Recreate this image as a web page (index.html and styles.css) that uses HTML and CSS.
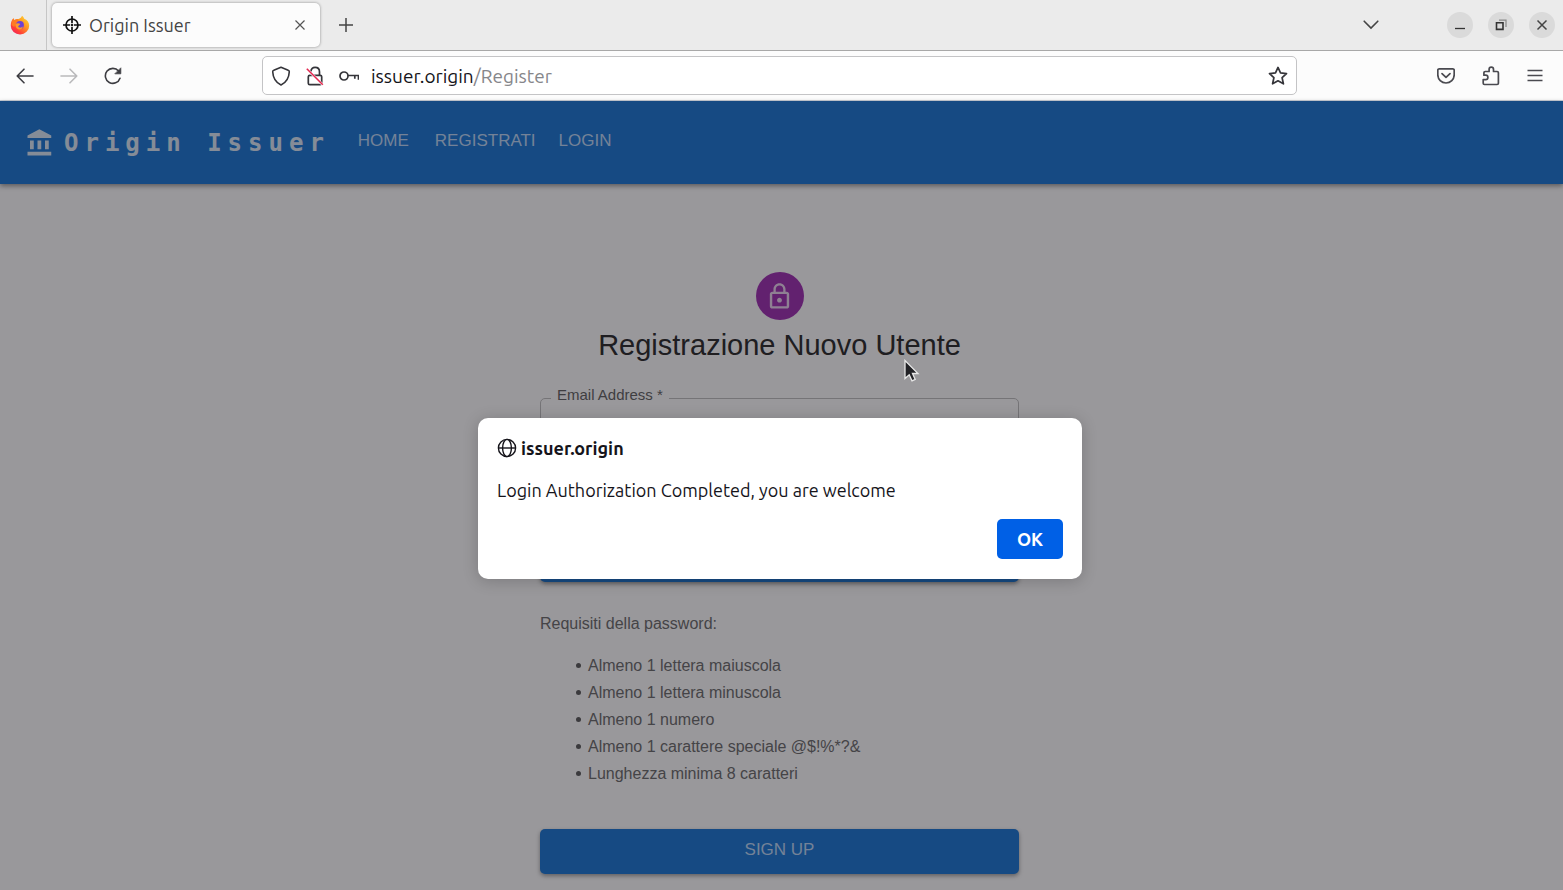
FILE: index.html
```html
<!DOCTYPE html>
<html lang="it">
<head>
<meta charset="utf-8">
<meta name="viewport" content="width=device-width, initial-scale=1">
<title>Origin Issuer</title>
<link rel="stylesheet" href="styles.css">
</head>
<body>
<div class="tabs">
  <div class="pinned">
    <svg class="icon" viewBox="0 0 20 20">
      <defs>
        <linearGradient id="flame" x1="1" y1="0" x2="0.1" y2="1">
          <stop offset="0" stop-color="#ffe83a"/><stop offset=".4" stop-color="#ff9a22"/><stop offset=".75" stop-color="#ff4038"/><stop offset="1" stop-color="#ee1c66"/>
        </linearGradient>
      </defs>
      <path fill="url(#flame)" d="M12 .8c1.300 1 1.900 1.900 2.200 2.900 2.800 1 5 3.500 5 7.100a9.200 8.500 0 0 1-18.400.2C.7 7.900 1.500 5 3.400 3.200l.7 2c1-.8 2-1.200 3.200-1.100C9 4 9.700 3.400 10.500 3 11.100 2.500 11.700 1.800 12 .8z"/>
      <path fill="#ff7a24" d="M3.500 3.200l1 2.300 3-1.200 1.500 2.300-3 2-1.800 3.500L1.500 10c0-3 .7-5 2-6.800z"/>
      <circle cx="10" cy="10" r="3.900" fill="#6c42d6"/>
      <path fill="#ff9b28" d="M5.700 8.800c1.600-1 3.100-.8 4.700.2l-1.500 1.500c-.7.500-1 1-.2 1.700 1.200.8 2.900.5 4.200-.7-.5 2.200-2.200 3.200-4 2.900-2.500-.4-3.900-3-3.200-5.600z"/>
    </svg>
  </div>
  <div class="tab">
    <svg class="icon-s" viewBox="0 0 18 18" fill="none" stroke="#111" stroke-width="1.700"><circle cx="9" cy="9" r="6"/><path d="M9 0v7.200M9 10.800V18M0 9h7.200M10.800 9H18M8 9h2M9 8v2"/></svg>
    <span class="tab-title">Origin Issuer</span>
    <button class="plain" aria-label="Close tab"><svg class="icon-xs" viewBox="0 0 12 12" stroke="#555" stroke-width="1.200"><path d="M1.500 1.500l9 9M10.500 1.500l-9 9"/></svg></button>
  </div>
  <button class="plain new-tab" aria-label="New tab"><svg class="icon-m" viewBox="0 0 16 16" stroke="#444" stroke-width="1.500"><path d="M8 1v14M1 8h14"/></svg></button>
  <div class="window">
    <button class="plain list-tabs" aria-label="List tabs"><svg class="icon-m" viewBox="0 0 16 16" fill="none" stroke="#444" stroke-width="1.600" stroke-linecap="round"><path d="M1.200 4.200L8 11l6.800-6.800"/></svg></button>
    <button class="round" aria-label="Minimize"><svg class="icon-xs" viewBox="0 0 12 12" stroke="#333" stroke-width="1.300"><path d="M1 9.500h10"/></svg></button>
    <button class="round" aria-label="Restore"><svg class="icon-xs" viewBox="0 0 12 12" fill="none" stroke="#333" stroke-width="1.600"><path d="M1.500 3.800h6.500v6.600H1.500z"/><path d="M4 1.200h7V8" stroke="#888" stroke-width="1.200"/></svg></button>
    <button class="round" aria-label="Close window"><svg class="icon-xs" viewBox="0 0 12 12" stroke="#444" stroke-width="1.500"><path d="M1.500 1.500l9 9M10.500 1.500l-9 9"/></svg></button>
  </div>
</div>

<div class="toolbar">
  <div class="history">
    <button class="plain" aria-label="Back"><svg class="icon-s" viewBox="0 0 18 18" fill="none" stroke="#3d3d42" stroke-width="1.600" stroke-linecap="round" stroke-linejoin="round"><path d="M17 9H1.200M8 2.200L1.200 9 8 15.800"/></svg></button>
    <button class="plain" aria-label="Forward"><svg class="icon-s" viewBox="0 0 18 18" fill="none" stroke="#b9b9bb" stroke-width="1.600" stroke-linecap="round" stroke-linejoin="round"><path d="M1 9h15.800M10 2.200L16.800 9 10 15.800"/></svg></button>
    <button class="plain" aria-label="Reload"><svg class="icon-s" viewBox="0 0 18 18" fill="none" stroke="#3d3d42" stroke-width="1.600" stroke-linecap="round"><path d="M16 11.200A7.500 7.500 0 1 1 14.600 4"/><path d="M16.800 1.200v5.600h-5.600z" fill="#3d3d42" stroke-width=".8" stroke-linejoin="round"/></svg></button>
  </div>
  <div class="address">
    <svg class="icon" viewBox="0 0 20 20" fill="none" stroke="#35353a" stroke-width="1.600" stroke-linejoin="round"><path d="M10 1.200l7.200 3c.8.3 1.200.8 1.100 1.600C18 11.500 15.500 16.500 10 19 4.500 16.500 2 11.500 1.700 5.800c-.1-.8.300-1.300 1.100-1.600z"/></svg>
    <svg class="icon" viewBox="0 0 20 20" fill="none" stroke="#35353a" stroke-width="1.700"><rect x="3.300" y="9.300" width="13.400" height="9.400" rx="1.500"/><path d="M5.800 5.500C6.200 3 7.900 1.400 10.100 1.400c2.600 0 4.400 1.800 4.400 4.500v3.200"/><path d="M1.800 2.800l16 16" stroke="#fff" stroke-width="2.600"/><path d="M1.800 2.800l16 16" stroke="#e22850" stroke-width="1.600"/></svg>
    <svg class="icon" viewBox="0 0 20 20" fill="none" stroke="#35353a" stroke-width="1.700"><circle cx="5" cy="10" r="4"/><path d="M9 9.500h10.500v4.200M15.800 9.500v3.200"/></svg>
    <span class="url">issuer.origin<span class="path">/Register</span></span>
    <button class="plain" aria-label="Bookmark"><svg class="icon" viewBox="0 0 20 20" fill="none" stroke="#35353a" stroke-width="1.700" stroke-linejoin="round"><path d="M10 1.400l2.500 5.500 6 .7-4.400 4.100 1.300 6.100-5.400-3-5.400 3 1.300-6.100L1.500 7.600l6-.7z"/></svg></button>
  </div>
  <div class="actions">
    <button class="plain" aria-label="Pocket"><svg class="icon-s" viewBox="0 0 18 18" fill="none" stroke="#4a4a50" stroke-width="1.700" stroke-linejoin="round" stroke-linecap="round"><path d="M2.200 1.800h13.600q1.400 0 1.400 1.400v4.600a8.200 8.200 0 0 1-16.400 0V3.200q0-1.400 1.400-1.400z"/><path d="M5 6.600l4 3.800 4-3.800"/></svg></button>
    <button class="plain" aria-label="Extensions"><svg class="icon" viewBox="0 0 20 20" fill="none" stroke="#4a4a50" stroke-width="1.700" stroke-linejoin="round"><path d="M3.500 18.500h12.600q1.300 0 1.300-1.300V6.800q0-1.300-1.300-1.300h-3.600V3.400a2.200 2.200 0 0 0-4.400 0v2.100H4.200q-1.300 0-1.300 1.300v2.400h1.800a2.200 2.200 0 0 1 0 4.400H2.200v3.600q0 1.300 1.300 1.300z"/></svg></button>
    <button class="plain" aria-label="Menu"><svg class="icon-m" viewBox="0 0 16 16" stroke="#4a4a50" stroke-width="1.600"><path d="M.5 2.500h15M.5 7.500h15M.5 12.500h15"/></svg></button>
  </div>
</div>

<div class="page">
  <header class="appbar">
    <svg class="bank" viewBox="0 0 24 24" fill="#fff"><path d="M4 10v7h3v-7zm6 0v7h3v-7zM2 22h19v-3H2zm14-12v7h3v-7zM11.500 1L2 6v2h19V6z"/></svg>
    <span class="brand">Origin Issuer</span>
    <nav class="nav">
      <a class="nav-first" href="#home">HOME</a>
      <a href="#register">REGISTRATI</a>
      <a href="#login">LOGIN</a>
    </nav>
  </header>

  <main class="main">
    <form class="form">
      <div class="avatar"><svg class="lock" viewBox="0 0 24 24" fill="#fff"><path d="M12 17c1.100 0 2-.9 2-2s-.9-2-2-2-2 .9-2 2 .9 2 2 2zm6-9h-1V6c0-2.760-2.240-5-5-5S7 3.240 7 6v2H6c-1.100 0-2 .9-2 2v10c0 1.100.9 2 2 2h12c1.100 0 2-.9 2-2V10c0-1.100-.9-2-2-2zM8.900 6c0-1.710 1.390-3.100 3.100-3.100s3.100 1.390 3.100 3.100v2H8.900V6zM18 20H6V10h12v10z"/></svg></div>
      <h1 class="title">Registrazione Nuovo Utente</h1>
      <fieldset class="field">
        <legend class="legend"><label for="email">Email Address *</label></legend>
        <input class="input" id="email" type="email">
      </fieldset>
      <button class="primary device" type="button" aria-label="Registra"></button>
      <p class="rules-title">Requisiti della password:</p>
      <ul class="rules">
        <li>Almeno 1 lettera maiuscola</li>
        <li>Almeno 1 lettera minuscola</li>
        <li>Almeno 1 numero</li>
        <li>Almeno 1 carattere speciale @$!%*?&amp;</li>
        <li>Lunghezza minima 8 caratteri</li>
      </ul>
      <button class="primary signup" type="submit">SIGN UP</button>
    </form>
  </main>

  <div class="backdrop">
    <div class="dialog" role="alertdialog" aria-labelledby="origin" aria-describedby="message">
      <div class="dialog-head">
        <svg class="icon" viewBox="0 0 20 20" fill="none" stroke="#15141a" stroke-width="1.400"><circle cx="10" cy="10" r="8.600"/><ellipse cx="10" cy="10" rx="4.400" ry="8.600"/><path d="M1.400 10h17.200"/></svg>
        <strong id="origin">issuer.origin</strong>
      </div>
      <p class="message" id="message">Login Authorization Completed, you are welcome</p>
      <button class="ok">OK</button>
    </div>
  </div>
  <svg class="pointer" viewBox="0 0 16 24"><path d="M1 1.500v18l4.200-3.700 2.800 6 3.200-1.400-2.700-5.900h5.500z" fill="#222226" stroke="#e8e8e8" stroke-width="1.300"/></svg>
</div>
</body>
</html>
```

FILE: styles.css
```css
* { box-sizing: border-box; }

body {
  margin: 0;
  min-height: 100vh;
  display: flex;
  flex-direction: column;
  font-family: Ubuntu, "Noto Sans", sans-serif;
  font-size: 18px;
  color: #15141a;
}

svg { display: block; flex: none; }
.icon { width: 20px; height: 20px; }
.icon-s { width: 18px; height: 18px; }
.icon-m { width: 16px; height: 16px; }
.icon-xs { width: 12px; height: 12px; }

.plain {
  display: grid;
  place-items: center;
  padding: 0;
  border: 0;
  background: none;
}

/* Tab strip */
.tabs {
  display: flex;
  align-items: center;
  height: 51px;
  background: #ebebeb;
  border-bottom: 1px solid #a8a8a8;
}
.pinned {
  display: flex;
  align-items: center;
  width: 47px;
  height: 50px;
  padding-left: 10px;
  border-right: 1px solid #c6c6c6;
}
.tab {
  display: flex;
  align-items: center;
  gap: 8px;
  width: 268px;
  height: 44px;
  margin-left: 5px;
  padding: 0 14px 0 11px;
  border-radius: 5px;
  background: #fcfcfc;
  box-shadow: 0 0 3px rgba(0, 0, 0, .4);
}
.tab-title { flex: 1; color: #444; }
.new-tab { margin-left: 18px; }
.window {
  display: flex;
  align-items: center;
  gap: 15px;
  margin-left: auto;
  padding-right: 8px;
}
.list-tabs { margin-right: 53px; }
.round {
  display: grid;
  place-items: center;
  width: 26px;
  height: 26px;
  padding: 0;
  border: 0;
  border-radius: 50%;
  background: #dadada;
}

/* Navigation toolbar */
.toolbar {
  display: flex;
  align-items: center;
  height: 50px;
  padding: 0 20px 0 16px;
  background: #fcfcfc;
  border-bottom: 1px solid #ccd0d8;
}
.history { display: flex; gap: 26px; width: 246px; }
.address {
  display: flex;
  align-items: center;
  gap: 14px;
  flex: 1;
  height: 39px;
  padding: 0 8px;
  border: 1px solid #c4c4c6;
  border-radius: 5px;
  background: #fff;
}
.url { flex: 1; margin-left: -2px; font-size: 19px; }
.path { color: #86868a; }
.actions {
  display: flex;
  align-items: center;
  justify-content: flex-end;
  gap: 26px;
  width: 246px;
}

/* Web page */
.page {
  position: relative;
  flex: 1;
  background: #fff;
  font-family: "Liberation Sans", Arial, sans-serif;
}
.appbar {
  display: flex;
  align-items: center;
  height: 83px;
  padding-left: 25px;
  background: #1272d4;
  color: #fff;
  box-shadow: 0 2px 5px rgba(0, 0, 0, .45);
}
.bank { width: 30px; height: 30px; opacity: .85; }
.brand {
  margin-left: 9px;
  font-family: "DejaVu Sans Mono", monospace;
  font-size: 24px;
  font-weight: 700;
  letter-spacing: 6px;
  opacity: .85;
}
.nav { display: flex; gap: 23px; margin-left: 28px; padding-bottom: 3px; }
.nav a { color: #bcd8f8; font-size: 17px; text-decoration: none; }
.nav-first { margin-right: 3px; }

.main { padding: 88px 20px 15px 16px; }
.form {
  display: flex;
  flex-direction: column;
  max-width: 479px;
  margin: 0 auto;
}
.avatar {
  display: grid;
  place-items: center;
  align-self: center;
  width: 48px;
  height: 48px;
  border-radius: 50%;
  background: #9c27b0;
}
.lock { width: 29px; height: 29px; opacity: .8; }
.title {
  margin: 5px 0 22px;
  font-size: 29px;
  font-weight: 400;
  line-height: 40px;
  text-align: center;
  color: #212121;
}
.field {
  margin: 0;
  padding: 0 10px;
  border: 1px solid #bdbdbd;
  border-radius: 5px;
}
.legend {
  padding: 0 6px 6px;
  font-size: 15px;
  line-height: 16px;
  color: #5c5c5c;
}
.input {
  display: block;
  width: 100%;
  height: 56px;
  border: 0;
  outline: 0;
  background: none;
}
.primary {
  height: 45px;
  padding: 0 0 4px;
  border: 0;
  border-radius: 5px;
  background: #1272d4;
  box-shadow: 0 2px 4px rgba(0, 0, 0, .4);
  color: #bcd8f8;
  font-family: inherit;
  font-size: 17px;
}
.device { margin-top: 71px; }
.rules-title,
.rules {
  margin: 0;
  font-size: 16px;
  line-height: 27px;
  color: #666;
}
.rules-title { margin-top: 28px; }
.rules { margin-top: 15px; padding-left: 36px; list-style: none; }
.rules li::before {
  content: "";
  display: inline-block;
  width: 5px;
  height: 5px;
  margin-right: 7px;
  border-radius: 50%;
  background: #555;
  vertical-align: 3px;
}
.signup { margin-top: 42px; }

/* Alert */
.backdrop {
  position: absolute;
  inset: 0;
  display: grid;
  place-items: center;
  padding: 6px 3px 0 0;
  background: rgba(28, 27, 34, .45);
  font-family: Ubuntu, "Noto Sans", sans-serif;
}
.dialog {
  display: flex;
  flex-direction: column;
  width: 604px;
  max-width: 100%;
  padding: 19px 19px 20px;
  border-radius: 10px;
  background: #fff;
  box-shadow: 0 2px 16px rgba(0, 0, 0, .2);
  line-height: 22px;
}
.dialog-head { display: flex; align-items: center; gap: 4px; }
.message { margin: 20px 0 18px; }
.ok {
  align-self: flex-end;
  width: 66px;
  height: 40px;
  border: 0;
  border-radius: 5px;
  background: #0060e6;
  color: #fff;
  font: inherit;
  font-weight: 700;
}
.pointer {
  position: absolute;
  top: 258px;
  left: calc(50% + 122px);
  width: 16px;
  height: 24px;
}
```
